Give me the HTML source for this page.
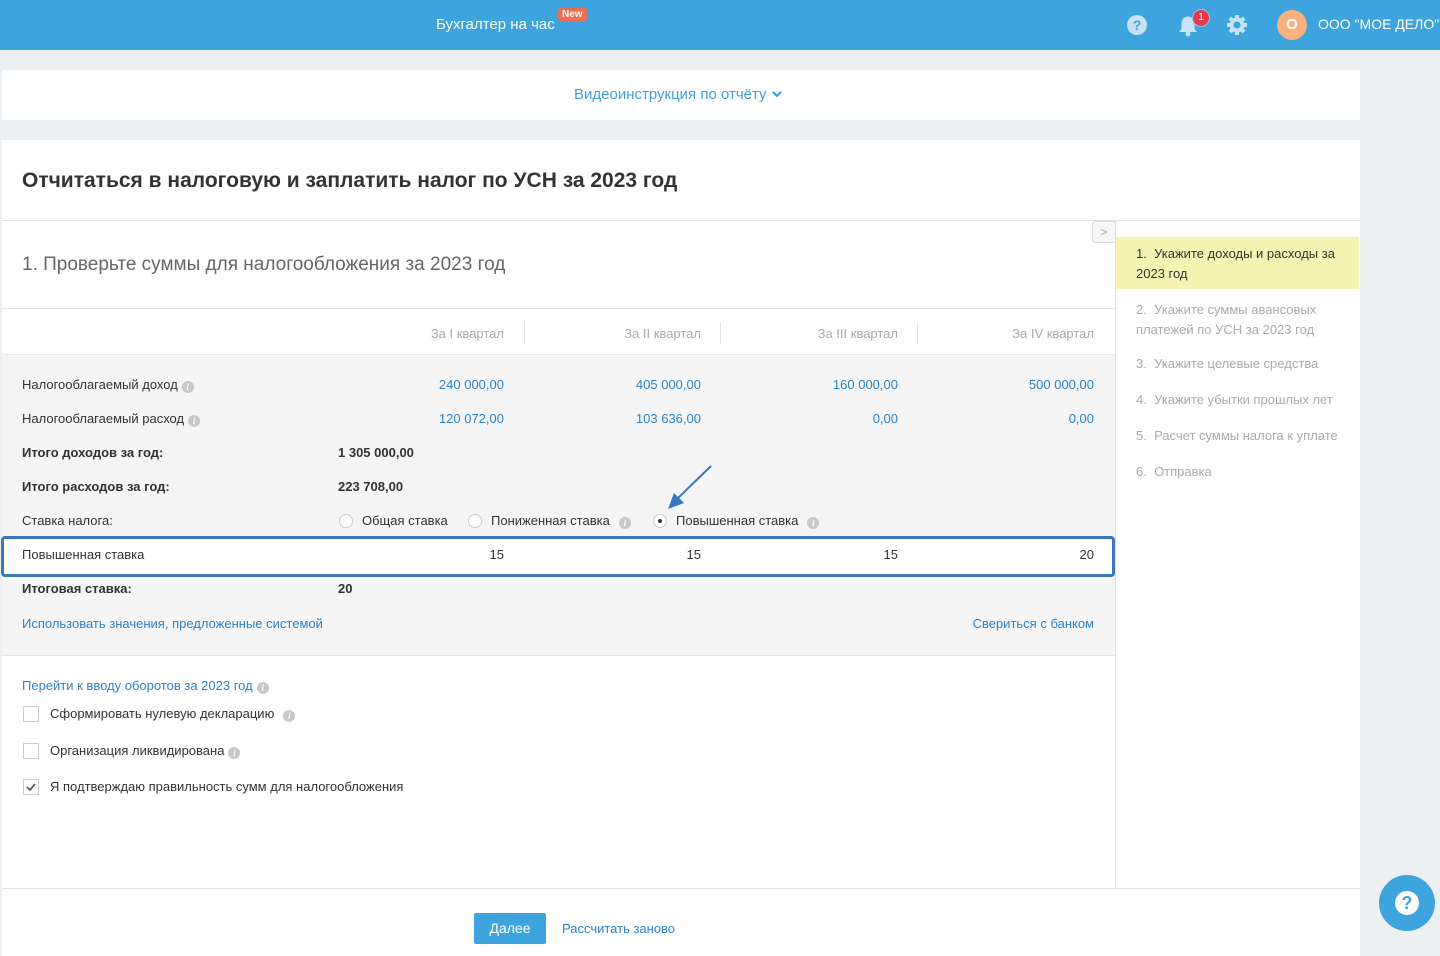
<!DOCTYPE html>
<html><head><meta charset="utf-8">
<style>
*{margin:0;padding:0;box-sizing:border-box}
body{width:1440px;height:956px;background:#edf0f3;font-family:"Liberation Sans",Arial,sans-serif;font-size:13px;color:#333;position:relative;overflow:hidden}
.a{position:absolute;white-space:nowrap}
.r{text-align:right}
.blue{color:#2a83c9}
.info{display:inline-block;width:12px;height:12px;border-radius:50%;background:#c8c8c8;color:#fff;font-size:9px;font-style:italic;font-weight:bold;text-align:center;line-height:12px;vertical-align:-1px;margin-left:4px;font-family:"Liberation Serif",serif}
.rad{position:absolute;width:14px;height:14px;border-radius:50%;border:1px solid #ccc;background:#fff}
.cb{position:absolute;width:16px;height:16px;border:1px solid #ccc;background:#fff}
</style></head><body>
<div class="a" style="left:0;top:0;width:1440px;height:50px;background:#3ea4dd"></div>
<div class="a" style="left:436px;top:16px;color:#fff;font-size:15px">Бухгалтер на час</div>
<div class="a" style="left:558px;top:8px;background:#f06d55;color:#fff;font-size:10px;padding:1px 4px;border-radius:3px;font-weight:bold">New</div>
<svg class="a" style="left:1126px;top:14px" width="22" height="22" viewBox="0 0 22 22"><circle cx="11" cy="11" r="10" fill="#c5e2f6"/><text x="11" y="16" font-size="14" font-weight="bold" text-anchor="middle" fill="#3ea4dd" font-family="Liberation Sans">?</text></svg>
<svg class="a" style="left:1176px;top:12px" width="24" height="26" viewBox="0 0 24 26"><path d="M3 20 L5.5 17 V11 a6.5 6.5 0 0 1 13 0 V17 L21 20 Z" fill="#c5e2f6"/><circle cx="12" cy="22" r="2.5" fill="#c5e2f6"/></svg>
<div class="a" style="left:1192px;top:9px;width:18px;height:18px;border-radius:50%;background:#e8394a;border:1px solid #8cc8ee;color:#fff;font-size:10px;text-align:center;line-height:16px">1</div>
<svg class="a" style="left:1226px;top:14px" width="22" height="22" viewBox="0 0 22 22"><g fill="#c5e2f6"><circle cx="11" cy="11" r="7.5"/><rect x="9" y="1" width="4" height="20"/><rect x="1" y="9" width="20" height="4"/><rect x="9" y="1" width="4" height="20" transform="rotate(45 11 11)"/><rect x="9" y="1" width="4" height="20" transform="rotate(-45 11 11)"/></g><circle cx="11" cy="11" r="3.5" fill="#3ea4dd"/></svg>
<div class="a" style="left:1277px;top:10px;width:30px;height:30px;border-radius:50%;background:#f8b07f;color:#fff;font-weight:bold;font-size:15px;text-align:center;line-height:30px">O</div>
<div class="a" style="left:1318px;top:16px;color:#fff;font-size:14px">ООО "МОЕ ДЕЛО"</div>

<div class="a" style="left:2px;top:70px;width:1358px;height:50px;background:#fff"></div>
<div class="a" style="left:574px;top:86px;font-size:15px;color:#3d9fdc">Видеоинструкция по отчёту <svg width="12" height="10" viewBox="0 0 12 10" style="vertical-align:0px"><path d="M2 3 L6 7 L10 3" stroke="#3d9fdc" stroke-width="2.2" fill="none"/></svg></div>

<div class="a" style="left:2px;top:140px;width:1358px;height:816px;background:#fff"></div>
<div class="a" style="left:22px;top:169px;font-size:21px;font-weight:bold;color:#333">Отчитаться в налоговую и заплатить налог по УСН за 2023 год</div>
<div class="a" style="left:2px;top:220px;width:1358px;height:1px;background:#e0e0e0"></div>
<div class="a" style="left:1115px;top:220px;width:1px;height:668px;background:#e0e0e0"></div>
<div class="a" style="left:1092px;top:221px;width:24px;height:22px;border:1px solid #ddd;border-radius:4px 0 0 4px;background:#f7f7f7;color:#999;text-align:center;line-height:20px;font-size:12px">&gt;</div>

<div class="a" style="left:1116px;top:237px;width:243px;height:52px;background:#f4f3b2"></div>
<div class="a" style="left:1136px;top:244px;line-height:20px;color:#333">1.&nbsp;&nbsp;Укажите доходы и расходы за<br>2023 год</div>
<div class="a" style="left:1136px;top:300px;line-height:20px;color:#aaa">2.&nbsp;&nbsp;Укажите суммы авансовых<br>платежей по УСН за 2023 год</div>
<div class="a" style="left:1136px;top:356px;color:#aaa">3.&nbsp;&nbsp;Укажите целевые средства</div>
<div class="a" style="left:1136px;top:392px;color:#aaa">4.&nbsp;&nbsp;Укажите убытки прошлых лет</div>
<div class="a" style="left:1136px;top:428px;color:#aaa">5.&nbsp;&nbsp;Расчет суммы налога к уплате</div>
<div class="a" style="left:1136px;top:464px;color:#aaa">6.&nbsp;&nbsp;Отправка</div>

<div class="a" style="left:22px;top:254px;font-size:19px;color:#666">1. Проверьте суммы для налогообложения за 2023 год</div>
<div class="a" style="left:2px;top:308px;width:1113px;height:1px;background:#e5e5e5"></div>
<div class="a" style="left:2px;top:354px;width:1113px;height:302px;background:#f5f5f5;border-top:1px solid #e8e8e8;border-bottom:1px solid #e5e5e5"></div>
<div class="a r" style="left:404px;width:100px;top:326px;color:#aaa">За I квартал</div>
<div class="a r" style="left:601px;width:100px;top:326px;color:#aaa">За II квартал</div>
<div class="a r" style="left:798px;width:100px;top:326px;color:#aaa">За III квартал</div>
<div class="a r" style="left:994px;width:100px;top:326px;color:#aaa">За IV квартал</div>
<div class="a" style="left:524px;top:322px;width:1px;height:22px;background:#e3e3e3"></div>
<div class="a" style="left:720px;top:322px;width:1px;height:22px;background:#e3e3e3"></div>
<div class="a" style="left:917px;top:322px;width:1px;height:22px;background:#e3e3e3"></div>

<div class="a" style="left:22px;top:377px">Налогооблагаемый доход<span class="info">i</span></div>
<div class="a r blue" style="left:404px;width:100px;top:377px">240 000,00</div>
<div class="a r blue" style="left:601px;width:100px;top:377px">405 000,00</div>
<div class="a r blue" style="left:798px;width:100px;top:377px">160 000,00</div>
<div class="a r blue" style="left:994px;width:100px;top:377px">500 000,00</div>
<div class="a" style="left:22px;top:411px">Налогооблагаемый расход<span class="info">i</span></div>
<div class="a r blue" style="left:404px;width:100px;top:411px">120 072,00</div>
<div class="a r blue" style="left:601px;width:100px;top:411px">103 636,00</div>
<div class="a r blue" style="left:798px;width:100px;top:411px">0,00</div>
<div class="a r blue" style="left:994px;width:100px;top:411px">0,00</div>
<div class="a" style="left:22px;top:445px;font-weight:bold">Итого доходов за год:</div>
<div class="a" style="left:338px;top:445px;font-weight:bold">1 305 000,00</div>
<div class="a" style="left:22px;top:479px;font-weight:bold">Итого расходов за год:</div>
<div class="a" style="left:338px;top:479px;font-weight:bold">223 708,00</div>
<div class="a" style="left:22px;top:513px">Ставка налога:</div>
<div class="rad" style="left:339px;top:514px"></div>
<div class="a" style="left:362px;top:513px">Общая ставка</div>
<div class="rad" style="left:468px;top:514px"></div>
<div class="a" style="left:491px;top:513px">Пониженная ставка<span class="info" style="margin-left:9px">i</span></div>
<div class="rad" style="left:653px;top:514px"><div style="width:4px;height:4px;border-radius:50%;background:#333;margin:4px"></div></div>
<div class="a" style="left:676px;top:513px">Повышенная ставка<span class="info" style="margin-left:9px">i</span></div>
<svg class="a" style="left:664px;top:463px" width="50" height="48" viewBox="0 0 50 48"><line x1="47" y1="3" x2="12" y2="37" stroke="#3579c4" stroke-width="2"/><path d="M4 46 L10 30 L20 40 Z" fill="#3579c4"/></svg>

<div class="a" style="left:1px;top:536px;width:1114px;height:41px;background:#fff;border:3px solid #3a78c0;border-radius:4px"></div>
<div class="a" style="left:22px;top:547px">Повышенная ставка</div>
<div class="a r" style="left:404px;width:100px;top:547px">15</div>
<div class="a r" style="left:601px;width:100px;top:547px">15</div>
<div class="a r" style="left:798px;width:100px;top:547px">15</div>
<div class="a r" style="left:994px;width:100px;top:547px">20</div>
<div class="a" style="left:22px;top:581px;font-weight:bold">Итоговая ставка:</div>
<div class="a" style="left:338px;top:581px;font-weight:bold">20</div>
<div class="a blue" style="left:22px;top:616px">Использовать значения, предложенные системой</div>
<div class="a r blue" style="left:900px;width:194px;top:616px">Свериться с банком</div>

<div class="a blue" style="left:22px;top:678px">Перейти к вводу оборотов за 2023 год<span class="info">i</span></div>
<div class="cb" style="left:23px;top:706px"></div>
<div class="a" style="left:50px;top:706px">Сформировать нулевую декларацию<span class="info" style="margin-left:9px">i</span></div>
<div class="cb" style="left:23px;top:743px"></div>
<div class="a" style="left:50px;top:743px">Организация ликвидирована<span class="info">i</span></div>
<div class="cb" style="left:23px;top:779px"><svg width="14" height="14" viewBox="0 0 14 14"><path d="M3 7 L6 10 L11 4" stroke="#444" stroke-width="1.5" fill="none"/></svg></div>
<div class="a" style="left:50px;top:779px">Я подтверждаю правильность сумм для налогообложения</div>

<div class="a" style="left:2px;top:888px;width:1358px;height:1px;background:#e0e0e0"></div>
<div class="a" style="left:474px;top:913px;width:72px;height:31px;background:#3ea4dd;border-radius:2px;color:#fff;font-size:14px;text-align:center;line-height:31px">Далее</div>
<div class="a blue" style="left:562px;top:921px">Рассчитать заново</div>

<div class="a" style="left:1379px;top:875px;width:56px;height:56px;border-radius:50%;background:#3ea4dd"></div>
<div class="a" style="left:1395px;top:891px;width:24px;height:24px;border-radius:50%;background:#fff;color:#3ea4dd;font-weight:bold;font-size:18px;text-align:center;line-height:24px">?</div>
</body></html>
